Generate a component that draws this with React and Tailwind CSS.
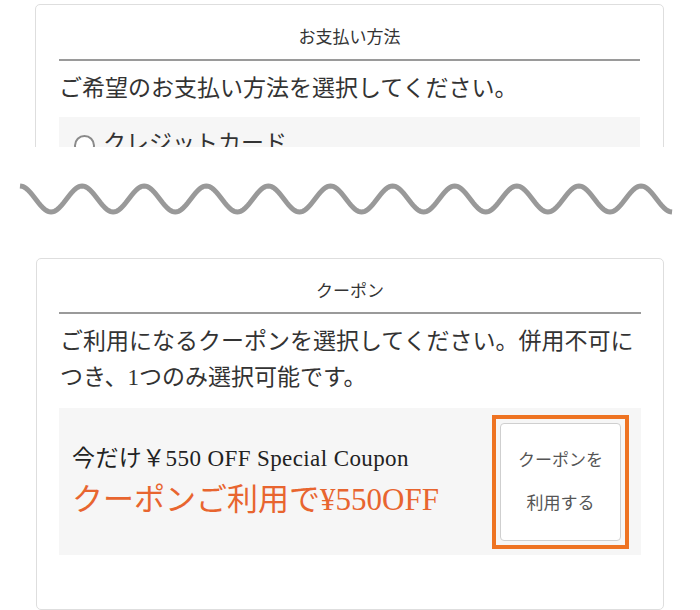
import React from 'react'

const font = { fontFamily: '"Liberation Serif", "Noto Sans CJK JP", serif' }

// sine wave separating the two cut-outs
const wavePath = () => {
  const x0 = 20
  const period = 62.1
  const len = period * 10.5
  const c = 26
  const a = 13
  let d = ''
  for (let i = 0; i <= 420; i++) {
    const x = x0 + (len * i) / 420
    const y = c - a * Math.cos((2 * Math.PI * (x - x0)) / period)
    d += (i === 0 ? 'M' : 'L') + x.toFixed(2) + ' ' + y.toFixed(2) + ' '
  }
  return d
}

const Wave = () => (
  <svg width="700" height="52" viewBox="0 0 700 52" className="block">
    <path d={wavePath()} fill="none" stroke="#999999" strokeWidth="5" strokeLinecap="butt" />
  </svg>
)

const App = () => {
  return (
    <div className="w-[700px] h-[610px] bg-white overflow-hidden text-[#333]" style={font}>
      {/* Payment method (cut off) */}
      <div className="h-[147px] overflow-hidden pt-[4px]">
        <div className="ml-[35px] w-[629px] border border-[#dedede] rounded-[5px] px-[23px] pb-6">
          <h2 className="text-center text-[17px] leading-[24px] pt-[21px] pb-[9px] border-b-2 border-[#9a9a9a]">
            お支払い方法
          </h2>
          <p className="text-[23px] leading-[36px] mt-[10px]">ご希望のお支払い方法を選択してください。</p>
          <div className="bg-[#f6f6f6] mt-[10px] h-[80px] pt-[12px] pl-[15px] flex items-start gap-[8px]">
            <span className="mt-[6px] w-[21px] h-[21px] rounded-full border-2 border-[#8a8a8a] bg-white shrink-0"></span>
            <span className="text-[23px] leading-[30px]">クレジットカード</span>
          </div>
        </div>
      </div>

      <div className="mt-[26px]">
        <Wave />
      </div>

      {/* Coupon */}
      <div className="mt-[33px] ml-[36px] w-[628px] h-[352px] border border-[#dedede] rounded-[5px] px-[22px]">
        <h2 className="text-center text-[17px] leading-[24px] pt-[21px] pb-[8px] border-b-2 border-[#9a9a9a]">
          クーポン
        </h2>
        <p className="text-[23px] leading-[36px] mt-[10px] pl-[1px]">
          ご利用になるクーポンを選択してください。併用不可につき、1つのみ選択可能です。
        </p>
        <div className="bg-[#f6f6f6] mt-[12px] h-[147px] flex items-center justify-between pl-[13px] pr-[12px]">
          <div className="flex flex-col">
            <span className="text-[23px] leading-[28px] tracking-[0.4px] text-[#222]">今だけ￥550 OFF Special Coupon</span>
            <span className="text-[31px] leading-[36px] mt-[9px] text-[#e8652f]">クーポンご利用で¥550OFF</span>
          </div>
          <div className="border-4 border-[#ee7322] p-[4px]">
            <button className="w-[121px] h-[118px] bg-white border border-[#cfcfcf] rounded-[4px] flex flex-col items-center justify-center text-[17px] leading-[43px] text-[#555]">
              <span>クーポンを</span>
              <span>利用する</span>
            </button>
          </div>
        </div>
      </div>
    </div>
  )
}

export default App
